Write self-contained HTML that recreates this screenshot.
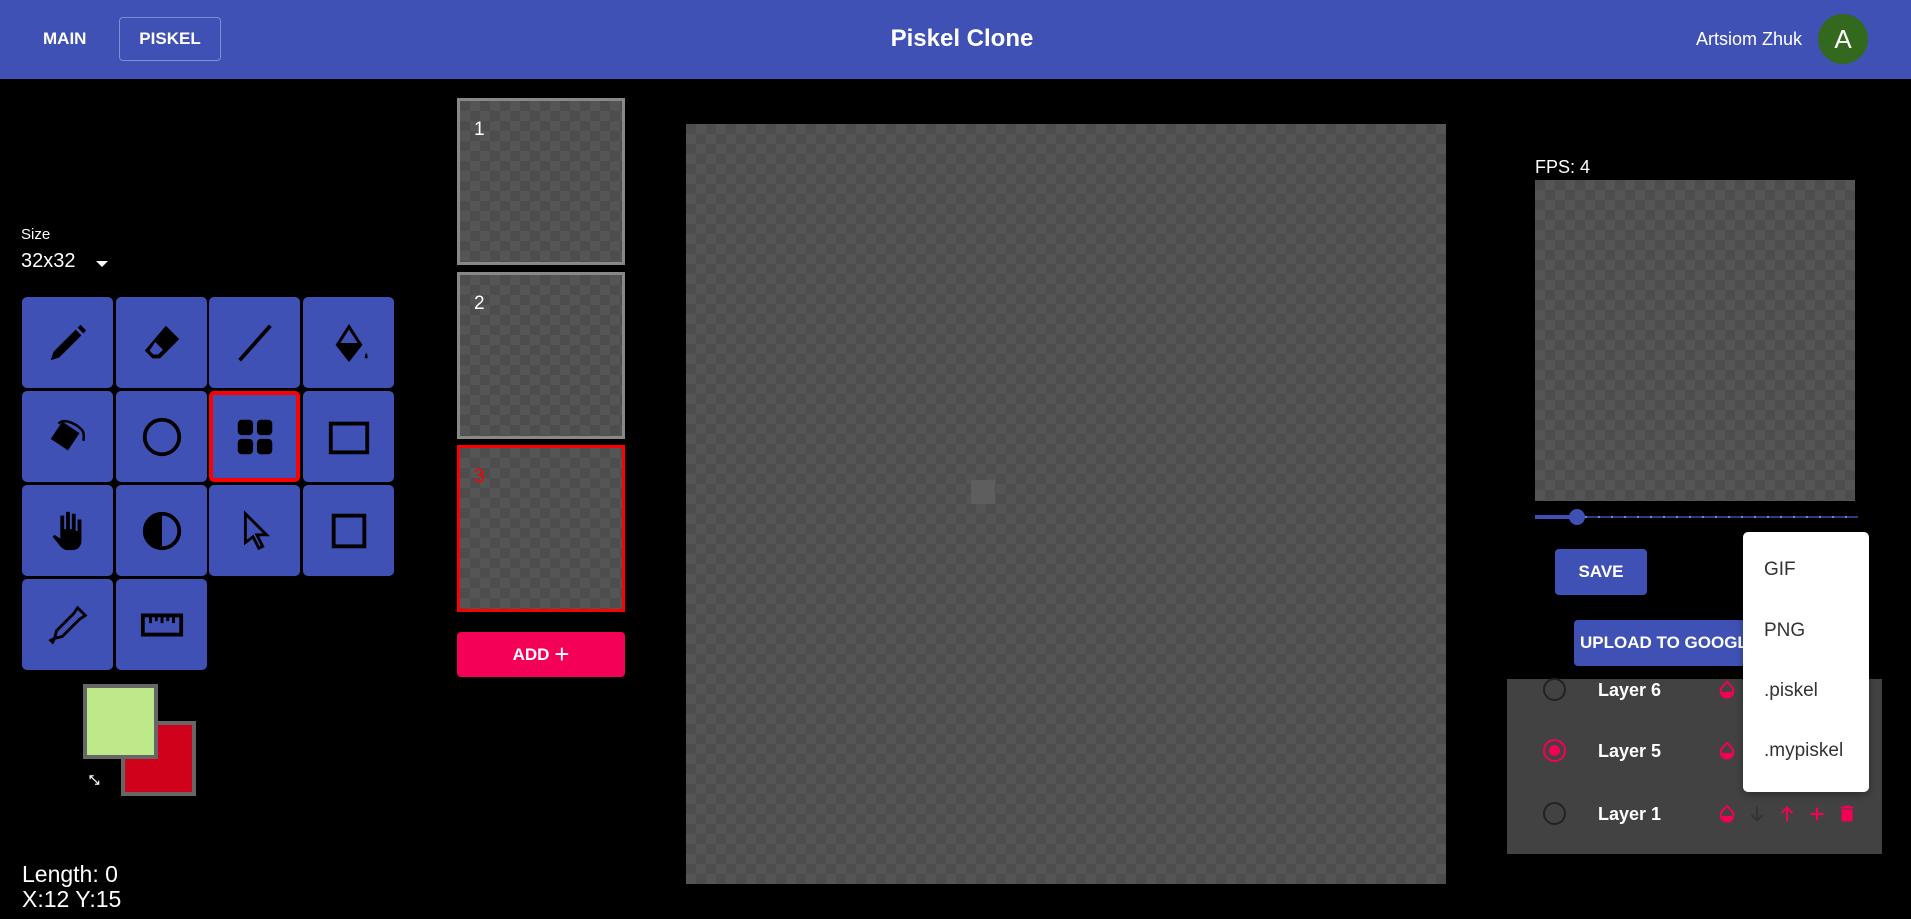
<!DOCTYPE html>
<html><head><meta charset="utf-8"><style>
*{margin:0;padding:0;box-sizing:border-box}
body{width:1911px;height:919px;background:#000;font-family:"Liberation Sans",Roboto,sans-serif;position:relative;overflow:hidden;color:#fff}
.abs{position:absolute}
.hdr{left:0;top:0;width:1911px;height:79px;background:#3f51b5}
.chk{background-color:#4d4d4d;background-image:conic-gradient(#555 25%,transparent 0 50%,#555 0 75%,transparent 0);background-size:20px 20px}
.tile{position:absolute;width:91px;height:91px;background:#3f51b5;border-radius:5px;display:flex;align-items:center;justify-content:center}
.tile svg{width:46px;height:46px}
.frame{position:absolute;left:457px;width:168px;border:3px solid #888}
.frame span{position:absolute;left:14px;top:18px;font-size:19px}
.mi{position:absolute;left:1764px;font-size:19px;color:#333}
.lay{position:absolute;left:1598px;font-size:18px;font-weight:bold}
.rad{position:absolute;left:1543px;width:23px;height:23px;border-radius:50%;border:2px solid #222}
</style></head><body>
<div class="abs hdr"></div>
<div class="abs" style="left:43px;top:29px;font-size:17px;font-weight:bold">MAIN</div>
<div class="abs" style="left:119px;top:17px;width:102px;height:44px;border:1px solid rgba(255,255,255,.35);border-radius:4px;font-size:17px;font-weight:bold;text-align:center;line-height:42px">PISKEL</div>
<div class="abs" style="left:862px;top:25px;width:200px;text-align:center;font-size:24px;font-weight:bold">Piskel Clone</div>
<div class="abs" style="left:1696px;top:29px;font-size:18px">Artsiom Zhuk</div>
<div class="abs" style="left:1818px;top:14px;width:50px;height:50px;border-radius:50%;background:#33691e;text-align:center;line-height:50px;font-size:26px">A</div>

<div class="abs" style="left:21px;top:226px;font-size:15px">Size</div>
<div class="abs" style="left:21px;top:250px;font-size:20px">32x32</div>
<div class="abs" style="left:96px;top:261px;border-left:6px solid transparent;border-right:6px solid transparent;border-top:6px solid #fff"></div>

<div class="tile" style="left:22px;top:297px"><svg viewBox="0 0 24 24"><path d="M3 21l1.5-4.5L16 5l3 3L7.5 19.5z M17 4l1.5-1.5 3 3L20 7z" fill="#000"/></svg></div>
<div class="tile" style="left:116px;top:297px"><svg viewBox="0 0 24 24"><path d="M14 3l7 7-10 10H7l-4-4z" fill="#000"/><path d="M8.5 11.5l4 4L10 18H7.5L5.5 16z" fill="#3f51b5"/></svg></div>
<div class="tile" style="left:209px;top:297px"><svg viewBox="0 0 24 24"><path d="M4 21L20 3" stroke="#000" stroke-width="2"/></svg></div>
<div class="tile" style="left:303px;top:297px"><svg viewBox="0 0 24 24"><path d="M12 2l7 11-7 9-7-9z" fill="#000"/><path d="M12 5l4.5 7h-9z" fill="#3f51b5"/><path d="M21 17c1 2 1 3 0 3s-1-1 0-3z" fill="#000"/></svg></div>

<div class="tile" style="left:22px;top:391px"><svg viewBox="0 0 24 24"><path d="M9 4l9 6-6 9-9-6z" fill="#000"/><path d="M7 5c3-3 9 0 12 3 2 2 1 6 1 6" stroke="#000" stroke-width="1.3" fill="none"/></svg></div>
<div class="tile" style="left:116px;top:391px"><svg viewBox="0 0 24 24"><circle cx="12" cy="12" r="9" stroke="#000" stroke-width="2" fill="none"/></svg></div>
<div class="tile" style="left:209px;top:391px;border:4px solid #f00"><svg viewBox="0 0 24 24"><rect x="3" y="3" width="8" height="8" rx="2"/><rect x="13" y="3" width="8" height="8" rx="2"/><rect x="3" y="13" width="8" height="8" rx="2"/><rect x="13" y="13" width="8" height="8" rx="2"/></svg></div>
<div class="tile" style="left:303px;top:391px"><svg viewBox="0 0 24 24"><rect x="2.5" y="5" width="19" height="15" stroke="#000" stroke-width="2" fill="none"/></svg></div>

<div class="tile" style="left:22px;top:485px"><svg viewBox="0 0 24 24"><path d="M8 12V4h2v7h1V2h2v9h1V3h2v9h1V6h2v11c0 3-2 5-5 5h-2c-2 0-3-1-4-2l-4-5 1-1 3 2z" fill="#000"/></svg></div>
<div class="tile" style="left:116px;top:485px"><svg viewBox="0 0 24 24"><circle cx="12" cy="12" r="9" stroke="#000" stroke-width="2" fill="none"/><path d="M12 3a9 9 0 0 0 0 18z" fill="#000"/></svg></div>
<div class="tile" style="left:209px;top:485px"><svg viewBox="0 0 24 24"><path d="M7 3v15l4-3 3 6 2-1-3-6h5z" stroke="#000" stroke-width="1.5" fill="none"/></svg></div>
<div class="tile" style="left:303px;top:485px"><svg viewBox="0 0 24 24"><rect x="4" y="4" width="16" height="16" stroke="#000" stroke-width="2" fill="none"/></svg></div>

<div class="tile" style="left:22px;top:579px"><svg viewBox="0 0 24 24"><path d="M17 3l4 4-3 2-9 9-4 1-1 2-1-1 2-1 1-4 9-9z" stroke="#000" stroke-width="1.5" fill="none"/></svg></div>
<div class="tile" style="left:116px;top:579px"><svg viewBox="0 0 24 24"><rect x="2" y="7" width="20" height="10" stroke="#000" stroke-width="2" fill="none"/><path d="M6 7v4M9 7v3M12 7v4M15 7v3M18 7v4" stroke="#000" stroke-width="1.5"/></svg></div>

<div class="abs" style="left:121px;top:721px;width:75px;height:75px;background:#d0021b;border:4px solid #666"></div>
<div class="abs" style="left:83px;top:684px;width:75px;height:75px;background:#bde98a;border:4px solid #666"></div>
<div class="abs" style="left:89px;top:772px;font-size:13px;font-weight:bold">⤡</div>
<div class="abs" style="left:22px;top:862px;font-size:23px;line-height:25px">Length: 0<br>X:12 Y:15</div>

<div class="frame chk" style="top:98px;height:167px"><span>1</span></div>
<div class="frame chk" style="top:272px;height:167px"><span>2</span></div>
<div class="frame chk" style="top:445px;height:167px;border-color:#f00"><span style="color:#f00">3</span></div>
<div class="abs" style="left:457px;top:632px;width:168px;height:45px;background:#f50057;border-radius:4px;text-align:center;line-height:45px;font-size:17px;font-weight:bold">ADD <span style="font-size:26px;font-weight:normal;vertical-align:-3px">+</span></div>

<div class="abs chk" style="left:686px;top:124px;width:760px;height:760px"></div>
<div class="abs" style="left:971px;top:480px;width:24px;height:24px;background:#5e5e5e"></div>

<div class="abs" style="left:1535px;top:157px;font-size:18px">FPS: 4</div>
<div class="abs chk" style="left:1535px;top:180px;width:320px;height:321px"></div>
<div class="abs" style="left:1535px;top:516px;width:323px;height:2px;background:repeating-linear-gradient(90deg,#2c3a80 0 11px,#7986cb 11px 13px)"></div>
<div class="abs" style="left:1535px;top:515px;width:40px;height:4px;background:#3f51b5"></div>
<div class="abs" style="left:1569px;top:509px;width:16px;height:16px;border-radius:50%;background:#3f51b5"></div>
<div class="abs" style="left:1555px;top:549px;width:92px;height:46px;background:#3f51b5;border-radius:4px;text-align:center;line-height:46px;font-size:17px;font-weight:bold">SAVE</div>
<div class="abs" style="left:1574px;top:620px;width:200px;height:46px;background:#3f51b5;border-radius:4px;line-height:46px;font-size:17px;font-weight:bold;padding-left:6px;overflow:hidden;white-space:nowrap">UPLOAD TO GOOGLE</div>

<div class="abs" style="left:1507px;top:679px;width:375px;height:175px;background:#424242"></div>
<div class="rad" style="top:678px"></div>
<div class="rad" style="top:739px;border-color:#f50057"><div style="position:absolute;left:4px;top:4px;width:11px;height:11px;border-radius:50%;background:#f50057"></div></div>
<div class="rad" style="top:802px"></div>
<div class="lay" style="top:680px">Layer 6</div>
<div class="lay" style="top:741px">Layer 5</div>
<div class="lay" style="top:804px">Layer 1</div>
<svg class="abs" style="left:1716px;top:678px" width="22" height="24" viewBox="0 0 24 24"><path d="M12 3l5.5 6a7 7 0 1 1-11 0z" stroke="#f50057" stroke-width="2" fill="none"/><path d="M5 14h14a7 7 0 0 1-14 0z" fill="#f50057"/></svg>
<svg class="abs" style="left:1716px;top:739px" width="22" height="24" viewBox="0 0 24 24"><path d="M12 3l5.5 6a7 7 0 1 1-11 0z" stroke="#f50057" stroke-width="2" fill="none"/><path d="M5 14h14a7 7 0 0 1-14 0z" fill="#f50057"/></svg>
<svg class="abs" style="left:1716px;top:802px" width="22" height="24" viewBox="0 0 24 24"><path d="M12 3l5.5 6a7 7 0 1 1-11 0z" stroke="#f50057" stroke-width="2" fill="none"/><path d="M5 14h14a7 7 0 0 1-14 0z" fill="#f50057"/></svg>
<svg class="abs" style="left:1746px;top:802px" width="22" height="24" viewBox="0 0 24 24"><path d="M12 4v15M6 13l6 6 6-6" stroke="#333" stroke-width="2" fill="none"/></svg>
<svg class="abs" style="left:1776px;top:802px" width="22" height="24" viewBox="0 0 24 24"><path d="M12 20V5M6 11l6-6 6 6" stroke="#f50057" stroke-width="2" fill="none"/></svg>
<svg class="abs" style="left:1806px;top:802px" width="22" height="24" viewBox="0 0 24 24"><path d="M12 5v14M5 12h14" stroke="#f50057" stroke-width="2.4"/></svg>
<svg class="abs" style="left:1836px;top:802px" width="22" height="24" viewBox="0 0 24 24"><path d="M6 7h12v13H6zM5 4h14v2H5zM9 3h6v2H9z" fill="#f50057"/></svg>

<div class="abs" style="left:1743px;top:532px;width:126px;height:260px;background:#fff;border-radius:5px;box-shadow:0 3px 8px rgba(0,0,0,.3)"></div>
<div class="mi" style="top:559px">GIF</div>
<div class="mi" style="top:620px">PNG</div>
<div class="mi" style="top:680px">.piskel</div>
<div class="mi" style="top:740px">.mypiskel</div>
</body></html>
